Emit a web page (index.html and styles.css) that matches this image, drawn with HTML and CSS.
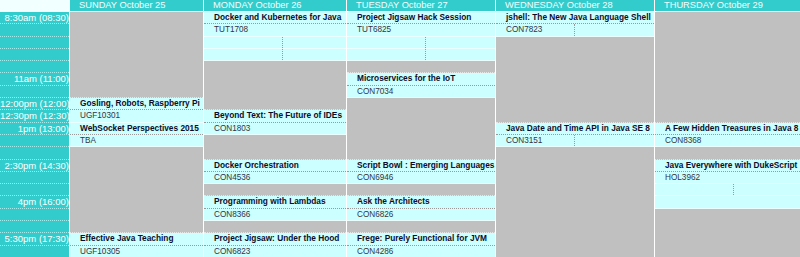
FILE: index.html
```html
<!DOCTYPE html>
<html>
<head>
<meta charset="utf-8">
<link rel="stylesheet" href="styles.css">
</head>
<body>
<div class="sched">
  <!-- time column -->
  <div class="corner"></div>
  <div class="tm">8:30am (08:30)</div>
  <div class="tm"></div>
  <div class="tm"></div>
  <div class="tm"></div>
  <div class="tm"></div>
  <div class="tm">11am (11:00)</div>
  <div class="tm"></div>
  <div class="tm">12:00pm (12:00)</div>
  <div class="tm">12:30pm (12:30)</div>
  <div class="tm">1pm (13:00)</div>
  <div class="tm"></div>
  <div class="tm"></div>
  <div class="tm">2:30pm (14:30)</div>
  <div class="tm"></div>
  <div class="tm"></div>
  <div class="tm">4pm (16:00)</div>
  <div class="tm"></div>
  <div class="tm"></div>
  <div class="tm">5:30pm (17:30)</div>
  <div class="tm"></div>

  <!-- Sunday -->
  <div class="hd">SUNDAY October 25</div>
  <div class="gap s7"></div>
  <div class="ti">Gosling, Robots, Raspberry Pi</div>
  <div class="cd">UGF10301</div>
  <div class="ti">WebSocket Perspectives 2015</div>
  <div class="cd">TBA</div>
  <div class="gap s7"></div>
  <div class="ti">Effective Java Teaching</div>
  <div class="cd">UGF10305</div>

  <!-- Monday -->
  <div class="hd">MONDAY October 26</div>
  <div class="ti">Docker and Kubernetes for Java</div>
  <div class="cd">TUT1708</div>
  <div class="cd split"><span class="half"></span><span></span></div>
  <div class="cd split"><span class="half"></span><span></span></div>
  <div class="gap s4"></div>
  <div class="ti">Beyond Text: The Future of IDEs</div>
  <div class="cd">CON1803</div>
  <div class="gap s2"></div>
  <div class="ti">Docker Orchestration</div>
  <div class="cd">CON4536</div>
  <div class="gap"></div>
  <div class="ti">Programming with Lambdas</div>
  <div class="cd">CON8366</div>
  <div class="gap"></div>
  <div class="ti">Project Jigsaw: Under the Hood</div>
  <div class="cd">CON6823</div>

  <!-- Tuesday -->
  <div class="hd">TUESDAY October 27</div>
  <div class="ti">Project Jigsaw Hack Session</div>
  <div class="cd">TUT6825</div>
  <div class="cd split"><span class="half"></span><span></span></div>
  <div class="cd split"><span class="half"></span><span></span></div>
  <div class="gap"></div>
  <div class="ti">Microservices for the IoT</div>
  <div class="cd">CON7034</div>
  <div class="gap s5"></div>
  <div class="ti">Script Bowl : Emerging Languages</div>
  <div class="cd">CON6946</div>
  <div class="gap"></div>
  <div class="ti">Ask the Architects</div>
  <div class="cd">CON6826</div>
  <div class="gap"></div>
  <div class="ti">Frege: Purely Functional for JVM</div>
  <div class="cd">CON4286</div>

  <!-- Wednesday -->
  <div class="hd">WEDNESDAY October 28</div>
  <div class="ti">jshell: The New Java Language Shell</div>
  <div class="cd split"><span class="half">CON7823</span><span></span></div>
  <div class="gap s7"></div>
  <div class="ti">Java Date and Time API in Java SE 8</div>
  <div class="cd split"><span class="half">CON3151</span><span></span></div>
  <div class="gap s9"></div>

  <!-- Thursday -->
  <div class="hd">THURSDAY October 29</div>
  <div class="gap s9"></div>
  <div class="ti">A Few Hidden Treasures in Java 8</div>
  <div class="cd">CON8368</div>
  <div class="gap"></div>
  <div class="ti">Java Everywhere with DukeScript</div>
  <div class="cd">HOL3962</div>
  <div class="cd split"><span class="half"></span><span></span></div>
  <div class="cd"></div>
  <div class="gap s4"></div>
</div>
</body>
</html>
```

FILE: styles.css
```css
html, body {
  margin: 0;
  padding: 0;
  background: #ffffff;
  overflow: hidden;
}

.sched {
  display: grid;
  grid-auto-flow: column;
  grid-template-columns: 69px 133px 142px 148px 158px 1fr;
  grid-template-rows: 12px repeat(20, 12.3px);
  column-gap: 1px;
  background: #ffffff;
  width: 800px;
  font-family: "Liberation Sans", Arial, sans-serif;
}

.sched > div {
  box-sizing: border-box;
  overflow: hidden;
  white-space: nowrap;
  min-width: 0;
}

.corner {
  background: #f2ffff;
  border-bottom: 1px solid #ffffff;
}

.hd {
  background: #33cccc;
  color: #f4ffff;
  font-size: 9.3px;
  line-height: 11px;
  padding-left: 9px;
  border-bottom: 1px solid #ffffff;
}

.tm {
  background: #33cccc;
  color: #ffffff;
  font-size: 9.5px;
  line-height: 11.5px;
  text-align: right;
  padding-right: 0;
  border-bottom: 1px dotted #a6e9e9;
}

.gap {
  background: #c0c0c0;
  border-bottom: 1px dotted #e6e6e6;
}

.s2 { grid-row: span 2; }
.s4 { grid-row: span 4; }
.s5 { grid-row: span 5; }
.s7 { grid-row: span 7; }
.s9 { grid-row: span 9; }

.ti {
  background: #ccffff;
  color: #0c0c2a;
  font-weight: bold;
  font-size: 8.3px;
  line-height: 11.5px;
  padding-left: 10px;
  border-bottom: 1px dotted #9a9a9a;
}

.cd {
  background: #ccffff;
  color: #333344;
  font-size: 8.2px;
  line-height: 11.5px;
  padding-left: 10px;
  border-bottom: 1px solid #ecffff;
}

.split {
  display: flex;
  padding-left: 0;
}

.split span {
  padding-left: 10px;
}

.split .half {
  width: 79px;
  flex: none;
  box-sizing: border-box;
  border-right: 1px dotted #9a9a9a;
}
```
